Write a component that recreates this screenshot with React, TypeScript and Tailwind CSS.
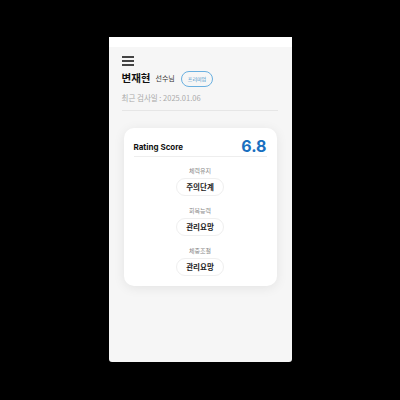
export default function App() {
  const items = [
    { label: '체력유지', value: '주의단계' },
    { label: '회복능력', value: '관리요망' },
    { label: '체중조절', value: '관리요망' },
  ];
  return (
    <div className="w-[400px] h-[400px] bg-black flex items-start justify-center pt-[37px]" style={{ fontFamily: '"Noto Sans CJK KR", "Noto Sans", sans-serif' }}>
      <div className="w-[183px] h-[325px] bg-[#f6f6f6] rounded-b-[3px] flex flex-col overflow-hidden">
        <div className="h-[10px] bg-white" />
        <div className="px-[13px] pt-[9px]">
          <div className="flex flex-col gap-[2.5px] w-[12px]">
            <span className="h-[1.5px] bg-[#444]" />
            <span className="h-[1.5px] bg-[#444]" />
            <span className="h-[1.5px] bg-[#444]" />
          </div>
          <div className="flex items-center mt-[5px] h-[16px]">
            <span className="text-[10.5px] font-bold text-[#111] leading-none">변재현</span>
            <span className="text-[7px] text-[#333] ml-[5px] leading-none">선수님</span>
            <span className="ml-[6px] h-[16px] px-[6px] rounded-full border border-[#6ab0e0] text-[#3b8fc8] text-[5px] flex items-center leading-none">프리미엄</span>
          </div>
          <div className="text-[7.5px] text-[#aaa] mt-[7px] leading-none">최근 검사일 : 2025.01.06</div>
          <div className="h-px bg-[#e6e6e6] mt-[9px] mr-[1px]" />
        </div>
        <div className="mx-[15px] mt-[17px] bg-white rounded-[10px] shadow-[0_2px_12px_rgba(0,0,0,0.08)] px-[10px] pt-[10px] pb-[10px]">
          <div className="flex items-end justify-between pb-[1px] border-b border-[#eee]">
            <span className="text-[8px] font-bold text-[#111] mb-[2px]" style={{ fontFamily: 'Inter, "Noto Sans", sans-serif' }}>Rating Score</span>
            <span className="text-[16px] font-bold text-[#1a6fc0] leading-none mb-[1px]" style={{ fontFamily: 'Inter, "Noto Sans", sans-serif' }}>6.8</span>
          </div>
          <div className="flex flex-col items-center mt-[11px] gap-[12px]">
            {items.map((it) => (
              <div key={it.label} className="flex flex-col items-center">
                <span className="text-[6px] text-[#888] leading-none">{it.label}</span>
                <span className="mt-[4px] w-[48px] h-[18px] rounded-full border border-[#efefef] flex items-center justify-center text-[7.5px] font-semibold text-[#222] leading-none">{it.value}</span>
              </div>
            ))}
          </div>
        </div>
      </div>
    </div>
  );
}
